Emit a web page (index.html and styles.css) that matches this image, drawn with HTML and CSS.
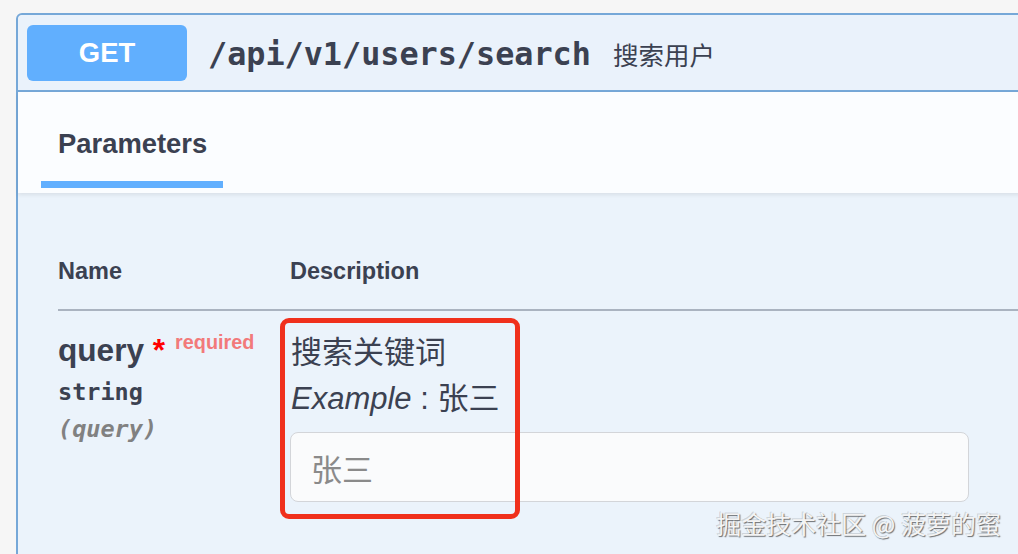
FILE: index.html
```html
<!DOCTYPE html>
<html lang="zh">
<head>
<meta charset="utf-8">
<title>GET /api/v1/users/search</title>
<link rel="stylesheet" href="styles.css">
</head>
<body>
<div class="page">
  <div class="card">
    <div class="summary">
      <span class="method">GET</span>
      <span class="path">/api/v1/users/search</span>
      <span class="summary-desc">搜索用户</span>
    </div>
    <div class="tabs">
      <div class="tab">Parameters</div>
    </div>
    <div class="params">
      <div class="params-head">
        <div class="col-name">Name</div>
        <div class="col-desc">Description</div>
      </div>
      <div class="param-row">
        <div class="col-name">
          <div class="pname">query <span class="star">*</span><span class="req">required</span></div>
          <div class="ptype">string</div>
          <div class="pin">(query)</div>
        </div>
        <div class="col-desc">
          <div class="desc-line">搜索关键词</div>
          <div class="desc-line"><i>Example</i> : 张三</div>
          <input class="pinput" type="text" placeholder="张三">
        </div>
      </div>
    </div>
  </div>
  <div class="highlight"></div>
  <div class="watermark">掘金技术社区 @ 菠萝的蜜</div>
</div>
</body>
</html>
```

FILE: styles.css
```css
* { box-sizing: border-box; }

html, body {
  margin: 0;
  padding: 0;
  background: #f6f6f6;
}

body {
  font-family: "Liberation Sans", "Noto Sans CJK SC", sans-serif;
  color: #3b4151;
}

.page {
  position: relative;
  height: 554px;
  overflow: hidden;
  padding: 13px 0 0 16px;
}

.card {
  margin-right: -20px;
  height: 560px;
  border: 2px solid #76a8d8;
  border-radius: 6px 0 0 0;
  background: #ebf3fb;
  display: flex;
  flex-direction: column;
}

.summary {
  display: flex;
  align-items: center;
  padding: 10px 9px 9px;
  background: #eaf2fb;
  border-bottom: 2px solid #76a8d8;
  border-radius: 5px 0 0 0;
}

.method {
  width: 160px;
  height: 56px;
  border-radius: 6px;
  background: #61affe;
  color: #fff;
  font-family: "Liberation Sans", sans-serif;
  font-weight: 700;
  font-size: 27.4px;
  display: flex;
  align-items: center;
  justify-content: center;
}

.path {
  margin-left: 21px;
  font-family: "DejaVu Sans Mono", monospace;
  font-weight: 700;
  font-size: 31.8px;
  color: #3b4151;
}

.summary-desc {
  margin-left: 22px;
  font-family: "Noto Sans CJK SC", sans-serif;
  font-size: 25.5px;
  color: #3b4151;
}

.tabs {
  display: flex;
  padding: 36px 0 5px 23px;
  background: #fbfdff;
  box-shadow: 0 2px 4px rgba(0, 0, 0, 0.08);
  position: relative;
}

.tab {
  padding: 0 16px 21px 17px;
  border-bottom: 7px solid #61affe;
  font-size: 27.4px;
  line-height: 32px;
  font-weight: 700;
  color: #3b4151;
}

.params {
  padding: 0 0 0 40px;
}

.params-head {
  display: flex;
  padding-top: 64px;
  padding-bottom: 24px;
  border-bottom: 2px solid #aab3c0;
  font-size: 23.5px;
  line-height: 28px;
  font-weight: 700;
}

.col-name {
  width: 232px;
  flex: none;
}

.col-desc {
  flex: 1;
}

.param-row {
  display: flex;
  padding-top: 19px;
}

.pname {
  font-size: 31.6px;
  line-height: 40px;
  height: 40px;
  font-weight: 700;
  white-space: nowrap;
}

.star {
  color: #f00;
}

.req {
  color: #f27a7a;
  font-size: 19.8px;
  line-height: 0;
  padding-left: 10px;
  vertical-align: 12px;
}

.ptype, .pin {
  font-family: "DejaVu Sans Mono", monospace;
  font-weight: 700;
  font-size: 23.5px;
  line-height: 33px;
}

.ptype {
  margin-top: 6px;
}

.pin {
  margin-top: 4px;
  font-style: italic;
  color: #818181;
}

.desc-line {
  font-size: 31px;
  line-height: 46px;
  padding-left: 1px;
}

.desc-line i {
  font-style: italic;
}

.pinput {
  display: block;
  margin-top: 10px;
  width: 679px;
  height: 70px;
  padding: 0 20px;
  border: 1px solid #d3d5d9;
  border-radius: 8px;
  background: #fafbfc;
  font-family: "Noto Sans CJK SC", sans-serif;
  font-size: 31px;
  color: #3b4151;
  outline: none;
}

.pinput::placeholder {
  color: #8a8a8a;
}

.highlight {
  position: absolute;
  left: 280px;
  top: 318px;
  width: 240px;
  height: 201px;
  border: 5px solid #f0301c;
  border-radius: 9px;
  pointer-events: none;
}

.watermark {
  position: absolute;
  right: 17px;
  bottom: 16px;
  font-family: "Noto Sans CJK SC", sans-serif;
  font-size: 25px;
  line-height: 30px;
  color: #f4f4f4;
  text-shadow: 1px 1px 1px rgba(0, 0, 0, 0.55), -1px -1px 0 rgba(0, 0, 0, 0.15);
  white-space: nowrap;
}
```
